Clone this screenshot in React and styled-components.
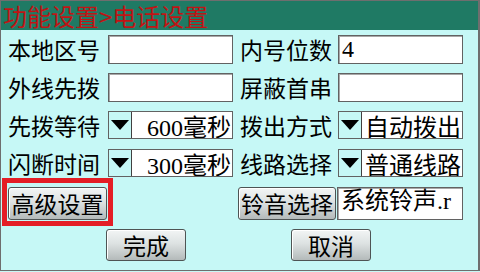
import React from "react";
import styled, { createGlobalStyle } from "styled-components";

const Global = createGlobalStyle`
  html, body { margin: 0; padding: 0; background: #c6f8f6; }
  * { box-sizing: border-box; }
`;

const Frame = styled.div`
  width: 480px;
  height: 271px;
  background: #c6f8f6;
  border-top: 1px solid #6e6e6e;
  border-left: 1px solid #6e6e6e;
  border-right: 2px solid #6e6e6e;
  border-bottom: 1px solid #6e6e6e;
  display: flex;
  flex-direction: column;
  font-family: "Noto Sans CJK SC", sans-serif;
  overflow: hidden;
`;

const TitleBar = styled.div`
  height: 29px;
  flex: none;
  background: #1f7a64;
  padding-left: 2px;
  display: flex;
  align-items: center;
`;

const TitleText = styled.span`
  color: #c01414;
  font-size: 24px;
  line-height: 29px;
  white-space: nowrap;
  display: inline-block;
  padding-right: 4px;
`;

const Body = styled.div`
  display: flex;
  flex-direction: column;
  gap: 9px;
  padding-top: 5px;
`;

const Row = styled.div`
  display: grid;
  grid-template-columns: 100px 125px 105px 125px;
  height: ${(p) => p.$h || 29}px;
  padding-left: 7px;
  align-items: stretch;
`;

const Label = styled.div`
  font-size: 23px;
  line-height: 29px;
  color: #000;
  white-space: nowrap;
  padding-left: ${(p) => (p.$right ? 7 : 0)}px;
`;

const Input = styled.div`
  background: #fff;
  border: 1px solid #626262;
  box-shadow: inset 1px 1px 0 #a8a8a8;
  font-family: "Liberation Serif", "Noto Sans CJK SC", serif;
  font-size: 24px;
  line-height: 26px;
  padding-left: 3px;
  white-space: nowrap;
  overflow: hidden;
  color: #000;
  margin-left: ${(p) => p.$ml || 0}px;
`;

const Select = styled.div`
  background: #fff;
  border: 1px solid #626262;
  display: flex;
  align-items: stretch;
  overflow: hidden;
  height: 28px;
`;

const Arrow = styled.div`
  width: 23px;
  flex: none;
  background: #c6f8f6;
  border-right: 1px solid #404040;
  display: flex;
  align-items: center;
  justify-content: center;
  &::after {
    content: "";
    border-left: 9px solid transparent;
    border-right: 9px solid transparent;
    border-top: 10px solid #000;
  }
`;

const SelectText = styled.div`
  flex: 1;
  display: flex;
  justify-content: flex-end;
  align-items: center;
  padding-right: 1px;
  font-family: "Liberation Serif", "Noto Sans CJK SC", serif;
  font-size: 24px;
  white-space: nowrap;
  color: #000;
`;

const Button = styled.button`
  position: relative;
  font-family: "Noto Sans CJK SC", sans-serif;
  font-size: 23px;
  line-height: 1;
  color: #000;
  padding: 0;
  border: 1px solid #4e5454;
  border-radius: 3px;
  background: linear-gradient(#f2f5f5 0%, #dde2e2 45%, #b4baba 100%);
  box-shadow: inset 1px 1px 0 #ffffff;
  width: ${(p) => p.$w}px;
  margin-left: ${(p) => p.$ml || 0}px;
  white-space: nowrap;
  display: flex;
  align-items: center;
  justify-content: center;
`;

const Highlight = styled.span`
  position: absolute;
  top: -10px;
  left: -7px;
  right: -7px;
  bottom: -7px;
  border: 5px solid #e41e26;
  pointer-events: none;
`;

const Actions = styled.div`
  display: flex;
  justify-content: space-evenly;
  height: 32px;
  padding-right: 2px;
`;

const Sel = ({ children }) => (
  <Select>
    <Arrow />
    <SelectText>{children}</SelectText>
  </Select>
);

export default function App() {
  return (
    <>
      <Global />
      <Frame>
        <TitleBar>
          <TitleText>功能设置&gt;电话设置</TitleText>
        </TitleBar>
        <Body>
          <Row>
            <Label>本地区号</Label>
            <Input />
            <Label $right>内号位数</Label>
            <Input>4</Input>
          </Row>
          <Row>
            <Label>外线先拨</Label>
            <Input />
            <Label $right>屏蔽首串</Label>
            <Input />
          </Row>
          <Row>
            <Label>先拨等待</Label>
            <Sel>600毫秒</Sel>
            <Label $right>拨出方式</Label>
            <Sel>自动拨出</Sel>
          </Row>
          <Row>
            <Label>闪断时间</Label>
            <Sel>300毫秒</Sel>
            <Label $right>线路选择</Label>
            <Sel>普通线路</Sel>
          </Row>
          <Row $h={33}>
            <Button $w={99}>
              高级设置
              <Highlight />
            </Button>
            <div />
            <Button $w={98} $ml={5}>铃音选择</Button>
            <Input $ml={-1}>系统铃声.r</Input>
          </Row>
          <Actions>
            <Button $w={80}>完成</Button>
            <Button $w={80}>取消</Button>
          </Actions>
        </Body>
      </Frame>
    </>
  );
}
